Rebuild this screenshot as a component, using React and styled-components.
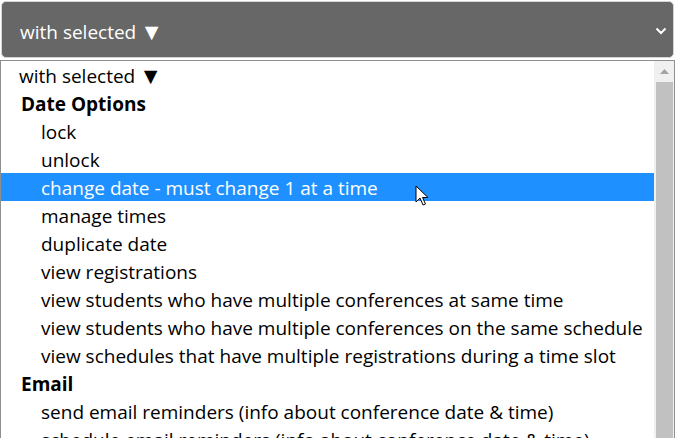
import React from "react";
import styled, { createGlobalStyle } from "styled-components";

const GlobalStyle = createGlobalStyle`
  html, body {
    margin: 0;
    padding: 0;
    background: #ffffff;
    overflow: hidden;
  }
  body {
    font-family: "Open Sans", "Noto Sans", sans-serif;
  }
`;

const groups = [
  {
    label: "Date Options",
    options: [
      "lock",
      "unlock",
      "change date - must change 1 at a time",
      "manage times",
      "duplicate date",
      "view registrations",
      "view students who have multiple conferences at same time",
      "view students who have multiple conferences on the same schedule",
      "view schedules that have multiple registrations during a time slot",
    ],
  },
  {
    label: "Email",
    options: [
      "send email reminders (info about conference date & time)",
      "schedule email reminders (info about conference date & time)",
    ],
  },
];

const SELECTED = "change date - must change 1 at a time";

const WithSelected = () => (
  <span>
    with selected <Triangle>▼</Triangle>
  </span>
);

export default function App() {
  return (
    <>
      <GlobalStyle />
      <Page>
        <SelectBox>
          <WithSelected />
          <svg width="12" height="8" viewBox="0 0 12 8">
            <path d="M1.5 1.5 L6 6 L10.5 1.5" fill="none" stroke="#fff" strokeWidth="2" />
          </svg>
        </SelectBox>
        <ListBox>
          <List>
            <Option $level={0}>
              <WithSelected />
            </Option>
            {groups.map((g) => (
              <React.Fragment key={g.label}>
                <GroupLabel>{g.label}</GroupLabel>
                {g.options.map((o) => (
                  <Option key={o} $level={1} $selected={o === SELECTED}>
                    {o}
                    {o === SELECTED && (
                      <Cursor width="14" height="22" viewBox="0 0 14 22">
                        <path
                          d="M1 1 L1 17 L5 13 L8 20 L10.5 19 L7.5 12.5 L13 12.5 Z"
                          fill="#fff"
                          stroke="#000"
                          strokeWidth="1"
                          strokeLinejoin="miter"
                        />
                      </Cursor>
                    )}
                  </Option>
                ))}
              </React.Fragment>
            ))}
          </List>
          <Scrollbar>
            <ArrowButton>
              <svg width="9" height="5" viewBox="0 0 9 5">
                <path d="M0 5 L4.5 0 L9 5 Z" fill="#a3a3a3" />
              </svg>
            </ArrowButton>
            <Thumb />
          </Scrollbar>
        </ListBox>
      </Page>
    </>
  );
}

const Page = styled.div`
  width: 675px;
  height: 438px;
  display: flex;
  flex-direction: column;
  overflow: hidden;
`;

const Triangle = styled.span`
  display: inline-block;
  font-size: 23px;
  line-height: 1;
  vertical-align: -1px;
  margin-left: -1px;
`;

const SelectBox = styled.div`
  margin: 1px 1px 0 1px;
  height: 57px;
  box-sizing: border-box;
  background: #676767;
  border: 1px solid #d4d4d4;
  border-radius: 5px;
  color: #ffffff;
  font-size: 19px;
  display: flex;
  align-items: center;
  justify-content: space-between;
  padding: 0 6px 0 18px;
  > span {
    margin-top: 4px;
  }
  svg {
    margin-top: 2px;
  }
`;

const ListBox = styled.div`
  margin-top: 2px;
  flex: 1;
  display: flex;
  border-top: 1px solid #8f8f8f;
  border-left: 1px solid #8f8f8f;
  border-right: 1px solid #8f8f8f;
  overflow: hidden;
`;

const List = styled.div`
  flex: 1;
  min-width: 0;
  font-size: 19px;
  color: #000;
`;

const Option = styled.div`
  position: relative;
  height: 28px;
  line-height: 30px;
  white-space: nowrap;
  padding-left: ${(p) => (p.$level ? 40 : 18)}px;
  background: ${(p) => (p.$selected ? "#1e90ff" : "transparent")};
  color: ${(p) => (p.$selected ? "#fff" : "#000")};
`;

const GroupLabel = styled.div`
  height: 28px;
  line-height: 30px;
  padding-left: 20px;
  font-weight: 700;
`;

const Cursor = styled.svg`
  position: absolute;
  left: 414px;
  top: 12px;
`;

const Scrollbar = styled.div`
  width: 20px;
  background: #f0f0f0;
  display: flex;
  flex-direction: column;
  align-items: center;
`;

const ArrowButton = styled.div`
  height: 21px;
  width: 100%;
  display: flex;
  align-items: center;
  justify-content: center;
`;

const Thumb = styled.div`
  width: 17px;
  flex: 1;
  background: #c1c1c1;
`;
